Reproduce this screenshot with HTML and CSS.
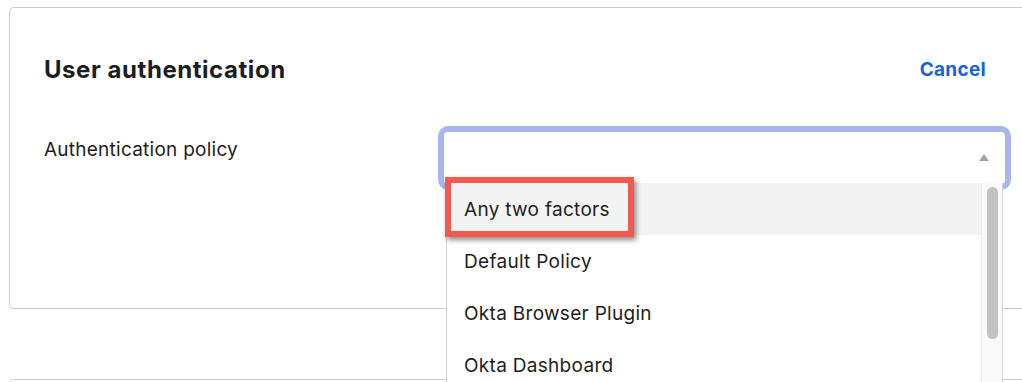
FILE: index.html
```html
<!DOCTYPE html>
<html lang="en">
<head>
  <meta charset="UTF-8">
  <title>User authentication</title>
  <link rel="stylesheet" href="styles.css">
</head>
<body>
  <div class="card">
    <div class="card-header">
      <h2>User authentication</h2>
      <a class="cancel-link" href="#">Cancel</a>
    </div>
    <div class="form-row">
      <label class="field-label">Authentication policy</label>
      <div class="select-wrap">
        <div class="select-box">
          <span class="select-arrow"></span>
        </div>
        <div class="dropdown">
          <ul class="options">
            <li class="option active">
              Any two factors
              <span class="callout"></span>
            </li>
            <li class="option">Default Policy</li>
            <li class="option">Okta Browser Plugin</li>
            <li class="option">Okta Dashboard</li>
          </ul>
          <div class="scroll-track">
            <div class="scroll-thumb"></div>
          </div>
        </div>
      </div>
    </div>
  </div>
  <div class="card next-card"></div>
</body>
</html>
```

FILE: styles.css
```css
/* Base */
html, body {
  overflow: hidden;
  height: 382px;
}
body {
  margin: 0;
  font-family: Inter, "Noto Sans", sans-serif;
  color: #1d1d21;
  background: #fff;
}
.card {
  margin: 7px 0 0 9px;
  width: 1060px;
  height: 300px;
  border: 1px solid #c9c9ce;
  border-radius: 5px;
}
.card-header {
  display: flex;
  align-items: center;
  justify-content: space-between;
  width: 942px;
  margin: 47px 0 0 34px;
  height: 28px;
}
.card-header h2 {
  margin: 0;
  font-size: 24px;
  font-weight: 700;
  letter-spacing: 0.55px;
}
.cancel-link {
  color: #1662dd;
  font-weight: 700;
  font-size: 19px;
  letter-spacing: 0.3px;
  text-decoration: none;
}
.form-row {
  display: flex;
  margin: 43px 0 0 34px;
}
.field-label {
  width: 394px;
  font-size: 19px;
  letter-spacing: 0.25px;
  line-height: 24px;
  margin-top: 12px;
}
.select-wrap {
  position: relative;
}
.select-box {
  width: 545px;
  height: 52px;
  border: 6px solid #a9b5ec;
  border-radius: 10px;
  background: #fff;
  display: flex;
  align-items: center;
  justify-content: flex-end;
  padding-right: 16px;
}
.select-arrow {
  width: 0;
  height: 0;
  border-left: 5px solid transparent;
  border-right: 5px solid transparent;
  border-bottom: 7px solid #a3a3ab;
  margin-top: -1px;
}
/* dropdown menu over the page */
.dropdown {
  position: absolute;
  left: 8px;
  top: 57px;
  width: 555px;
  height: 200px;
  background: #fff;
  border-left: 1px solid #d4d4d8;
  border-right: 1px solid #d4d4d8;
  display: flex;
}
.options {
  list-style: none;
  margin: 0;
  padding: 0;
  flex: 1;
}
.option {
  position: relative;
  height: 52px;
  display: flex;
  align-items: center;
  padding-left: 17px;
  font-size: 19px;
  letter-spacing: 0.3px;
}
.option.active {
  background: #f3f3f4;
}
.callout {
  position: absolute;
  left: -2px;
  top: -6px;
  width: 177px;
  height: 48px;
  border: 6px solid #f25a4f;
  box-shadow: 2px 3px 5px rgba(0, 0, 0, 0.45);
}
.scroll-track {
  width: 20px;
  background: #fafafa;
  border-left: 1px solid #ececee;
  padding-top: 4px;
}
.scroll-thumb {
  width: 11px;
  height: 152px;
  margin: 0 auto;
  border-radius: 6px;
  background: #c2c2c2;
}
.next-card {
  margin-top: 70px;
  height: 20px;
}
```
